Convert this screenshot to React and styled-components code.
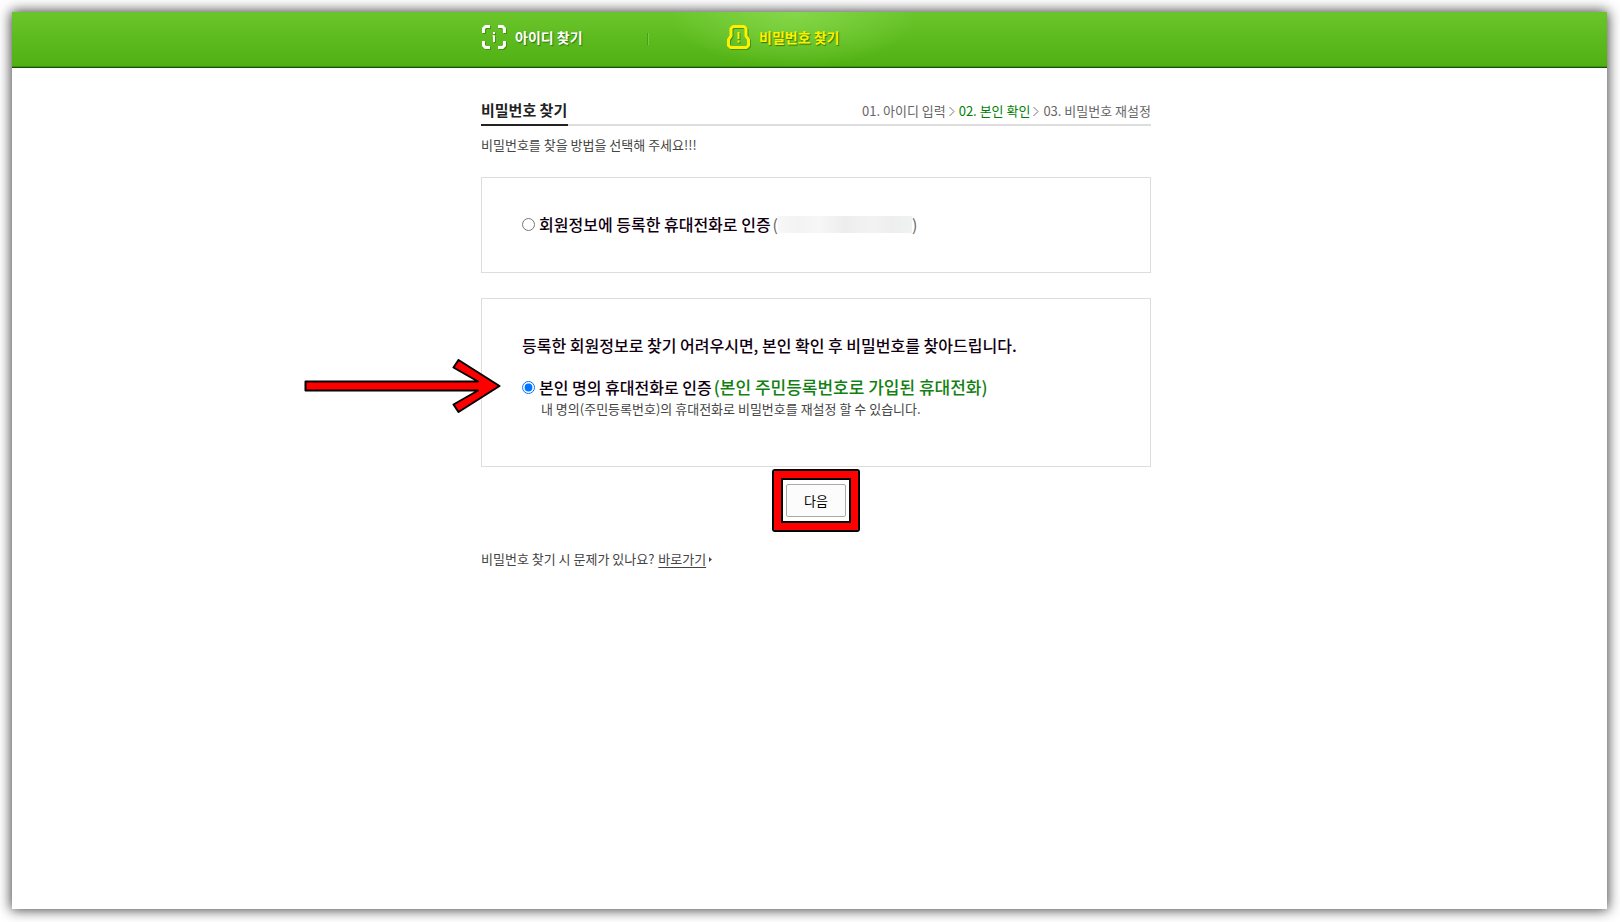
import React, { useState } from "react";
import styled, { createGlobalStyle } from "styled-components";

const GlobalStyle = createGlobalStyle`
  * { box-sizing: border-box; }
  body {
    margin: 0;
    background: #fff;
    color: #444;
    font: 13px/20px "Noto Sans CJK KR", "Noto Sans", sans-serif;
  }
  h1, h2, p, ol { margin: 0; padding: 0; }
`;

const Screen = styled.div`
  min-height: 100vh;
  padding: 12px 13px 13px 12px;
  display: flex;
`;

const Sheet = styled.div`
  flex: 1;
  background: #fff;
  box-shadow: 0 0 12px 1px rgba(0, 0, 0, 0.75);
`;

const Header = styled.header`
  height: 56px;
  padding-left: 13px;
  background: linear-gradient(#6ac52b, #50b012);
  border-bottom: 1px solid #14500a;
  box-shadow: inset 0 -1px 0 #3c960a;
`;

const Column = styled.div`
  width: 100%;
  max-width: 670px;
  margin: 0 auto;
`;

const Tabs = styled(Column).attrs({ as: "nav" })`
  display: flex;
  height: 54px;
`;

const Tab = styled.a`
  display: flex;
  align-items: center;
  gap: 9px;
  flex: 0 0 ${(p) => p.$width}px;
  padding: 0 0 4px ${(p) => p.$indent}px;
  color: ${(p) => (p.$active ? "#ffef00" : "#fff")};
  background: ${(p) =>
    p.$active
      ? "radial-gradient(ellipse 125px 56px at 50% 0, rgba(140, 220, 80, .8), rgba(140, 220, 80, 0))"
      : "none"};
  font-size: 14px;
  font-weight: 700;
  text-decoration: none;
  text-shadow: 1px 1px 1px #2c7a08;
  svg { filter: drop-shadow(1px 1px 0 #3f9410); }
`;

const Divider = styled.span`
  width: 2px;
  height: 12px;
  margin: 21px 19px 0 0;
  background: #48a010;
  border-right: 1px solid #78cc42;
`;

const Main = styled.main`
  padding: 31px 0 40px 13px;
`;

const TitleBar = styled.div`
  display: flex;
  justify-content: space-between;
  height: 27px;
  border-bottom: 2px solid #ddd;
`;

const Title = styled.h1`
  height: 27px;
  padding-right: 1px;
  border-bottom: 2px solid #222;
  color: #222;
  font-size: 15px;
  line-height: 22px;
  font-weight: 700;
`;

const Steps = styled.ol`
  display: flex;
  gap: 4px;
  list-style: none;
  line-height: 24px;
  height: 24px;
  color: #666;
`;

const Step = styled.li`
  display: flex;
  align-items: center;
  gap: 3px;
  color: ${(p) => (p.$current ? "#008000" : "inherit")};
  svg { color: #777; }
`;

const Lead = styled.p`
  margin: 9px 0 22px;
`;

const Panel = styled.section`
  padding: ${(p) => (p.$tall ? "32px 40px 49px" : "32px 40px 34px")};
  margin-bottom: ${(p) => (p.$tall ? 17 : 25)}px;
  border: 1px solid #ddd;
`;

const PanelTitle = styled.h2`
  margin-bottom: 14px;
  color: #100010;
  font-size: 16px;
  line-height: 28px;
  font-weight: 500;
`;

const Option = styled.div`
  position: relative;
  display: flex;
  align-items: center;
  height: 28px;
`;

const Radio = styled.input`
  width: 13px;
  height: 13px;
  margin: 0 4px 0 0;
`;

const Label = styled.label`
  display: flex;
  align-items: center;
  gap: 2px;
  color: #100010;
  font-size: 16px;
  font-weight: 500;
`;

const Phone = styled.span`
  display: flex;
  align-items: center;
  color: #666;
  font-weight: 400;
`;

const Masked = styled.span`
  width: 134px;
  height: 17px;
  background: linear-gradient(90deg, #f7f7f7, #f3f3f3 15%, #f7f7f7 30%, #ededed 50%, #f3f3f3 70%, #eee 85%, #f0f2f2);
`;

const Note = styled.strong`
  color: #128012;
  font-size: 17px;
  font-weight: 500;
`;

const Hint = styled.p`
  padding-left: 19px;
  line-height: 16px;
`;

const Arrow = styled.svg`
  position: absolute;
  top: -14px;
  left: -219px;
`;

const Actions = styled.div`
  display: flex;
  justify-content: center;
`;

const Marked = styled.div`
  position: relative;
  &::after {
    content: "";
    position: absolute;
    inset: -13px -12px;
    border: 7px solid #f00;
    border-radius: 1px;
    outline: 2px solid #000;
    box-shadow: inset 0 0 0 2px #000;
    pointer-events: none;
  }
`;

const NextButton = styled.button`
  display: block;
  width: 60px;
  height: 33px;
  padding: 0;
  border: 1px solid #aaa;
  border-radius: 2px;
  background: #fcfcfc;
  color: #000;
  font: inherit;
`;

const Help = styled.p`
  margin-top: 32px;
  display: flex;
  align-items: center;
  gap: 4px;
  a { color: inherit; text-underline-offset: 3px; }
`;

const Caret = styled.svg`
  margin-left: -1px;
`;

const IdIcon = () => (
  <svg width="24" height="24" viewBox="0 0 24 24" fill="none" stroke="#fff" strokeWidth="3" aria-hidden="true">
    <path d="M1.500 8V3.500l2-2H8M16 1.500h4.500l2 2V8M22.500 16v4.500l-2 2H16M8 22.500H3.500l-2-2V16" />
    <path strokeWidth="2" d="M12 7v2M12 10.500V17" />
    <path strokeWidth="1" d="M10.500 11H12" />
  </svg>
);

const LockIcon = () => (
  <svg width="23" height="24" viewBox="0 0 23 24" fill="none" stroke="#ffef00" aria-hidden="true">
    <path strokeWidth="3" strokeLinejoin="round" d="M6 1.500h11l2 2V11l2.500 3.500v6l-2 2h-16l-2-2v-6L4 11V3.500z" />
    <path strokeWidth="2" d="M11.500 7v7M11.500 15.500v2" />
  </svg>
);

const Chevron = () => (
  <svg width="6" height="11" viewBox="0 0 6 11" fill="none" stroke="currentColor" aria-hidden="true">
    <path d="M.5 1 5 5.500.5 10" />
  </svg>
);

export default function App() {
  const [method, setMethod] = useState("own");
  return (
    <>
      <GlobalStyle />
      <Screen>
        <Sheet>
          <Header>
            <Tabs>
              <Tab href="#id" $width={166} $indent={1}>
                <IdIcon />
                아이디 찾기
              </Tab>
              <Divider />
              <Tab href="#password" $active $width={250} $indent={59}>
                <LockIcon />
                비밀번호 찾기
              </Tab>
            </Tabs>
          </Header>
          <Main>
            <Column>
              <TitleBar>
                <Title>비밀번호 찾기</Title>
                <Steps>
                  <Step>01. 아이디 입력 <Chevron /></Step>
                  <Step $current>02. 본인 확인 <Chevron /></Step>
                  <Step>03. 비밀번호 재설정</Step>
                </Steps>
              </TitleBar>
              <Lead>비밀번호를 찾을 방법을 선택해 주세요!!!</Lead>
              <Panel>
                <Option>
                  <Radio type="radio" name="method" id="registered" checked={method === "registered"} onChange={() => setMethod("registered")} />
                  <Label htmlFor="registered">
                    회원정보에 등록한 휴대전화로 인증
                    <Phone>(<Masked />)</Phone>
                  </Label>
                </Option>
              </Panel>
              <Panel $tall>
                <PanelTitle>등록한 회원정보로 찾기 어려우시면, 본인 확인 후 비밀번호를 찾아드립니다.</PanelTitle>
                <Option>
                  <Radio type="radio" name="method" id="own" checked={method === "own"} onChange={() => setMethod("own")} />
                  <Label htmlFor="own">
                    본인 명의 휴대전화로 인증
                    <Note>(본인 주민등록번호로 가입된 휴대전화)</Note>
                  </Label>
                  <Arrow width="198" height="54" viewBox="0 0 198 54" aria-hidden="true">
                    <path
                      d="M2.500 22.500H175L150.500 8.500l5-7.500L196.500 27l-41 26-5-7.500L175 31.500H2.500z"
                      fill="#f00"
                      stroke="#000"
                      strokeWidth="2"
                      strokeLinejoin="round"
                    />
                  </Arrow>
                </Option>
                <Hint>내 명의(주민등록번호)의 휴대전화로 비밀번호를 재설정 할 수 있습니다.</Hint>
              </Panel>
              <Actions>
                <Marked>
                  <NextButton type="button">다음</NextButton>
                </Marked>
              </Actions>
              <Help>
                비밀번호 찾기 시 문제가 있나요? <a href="#help">바로가기</a>
                <Caret width="3" height="5" viewBox="0 0 3 5" aria-hidden="true">
                  <path d="M0 0l3 2.500L0 5z" fill="#444" />
                </Caret>
              </Help>
            </Column>
          </Main>
        </Sheet>
      </Screen>
    </>
  );
}
